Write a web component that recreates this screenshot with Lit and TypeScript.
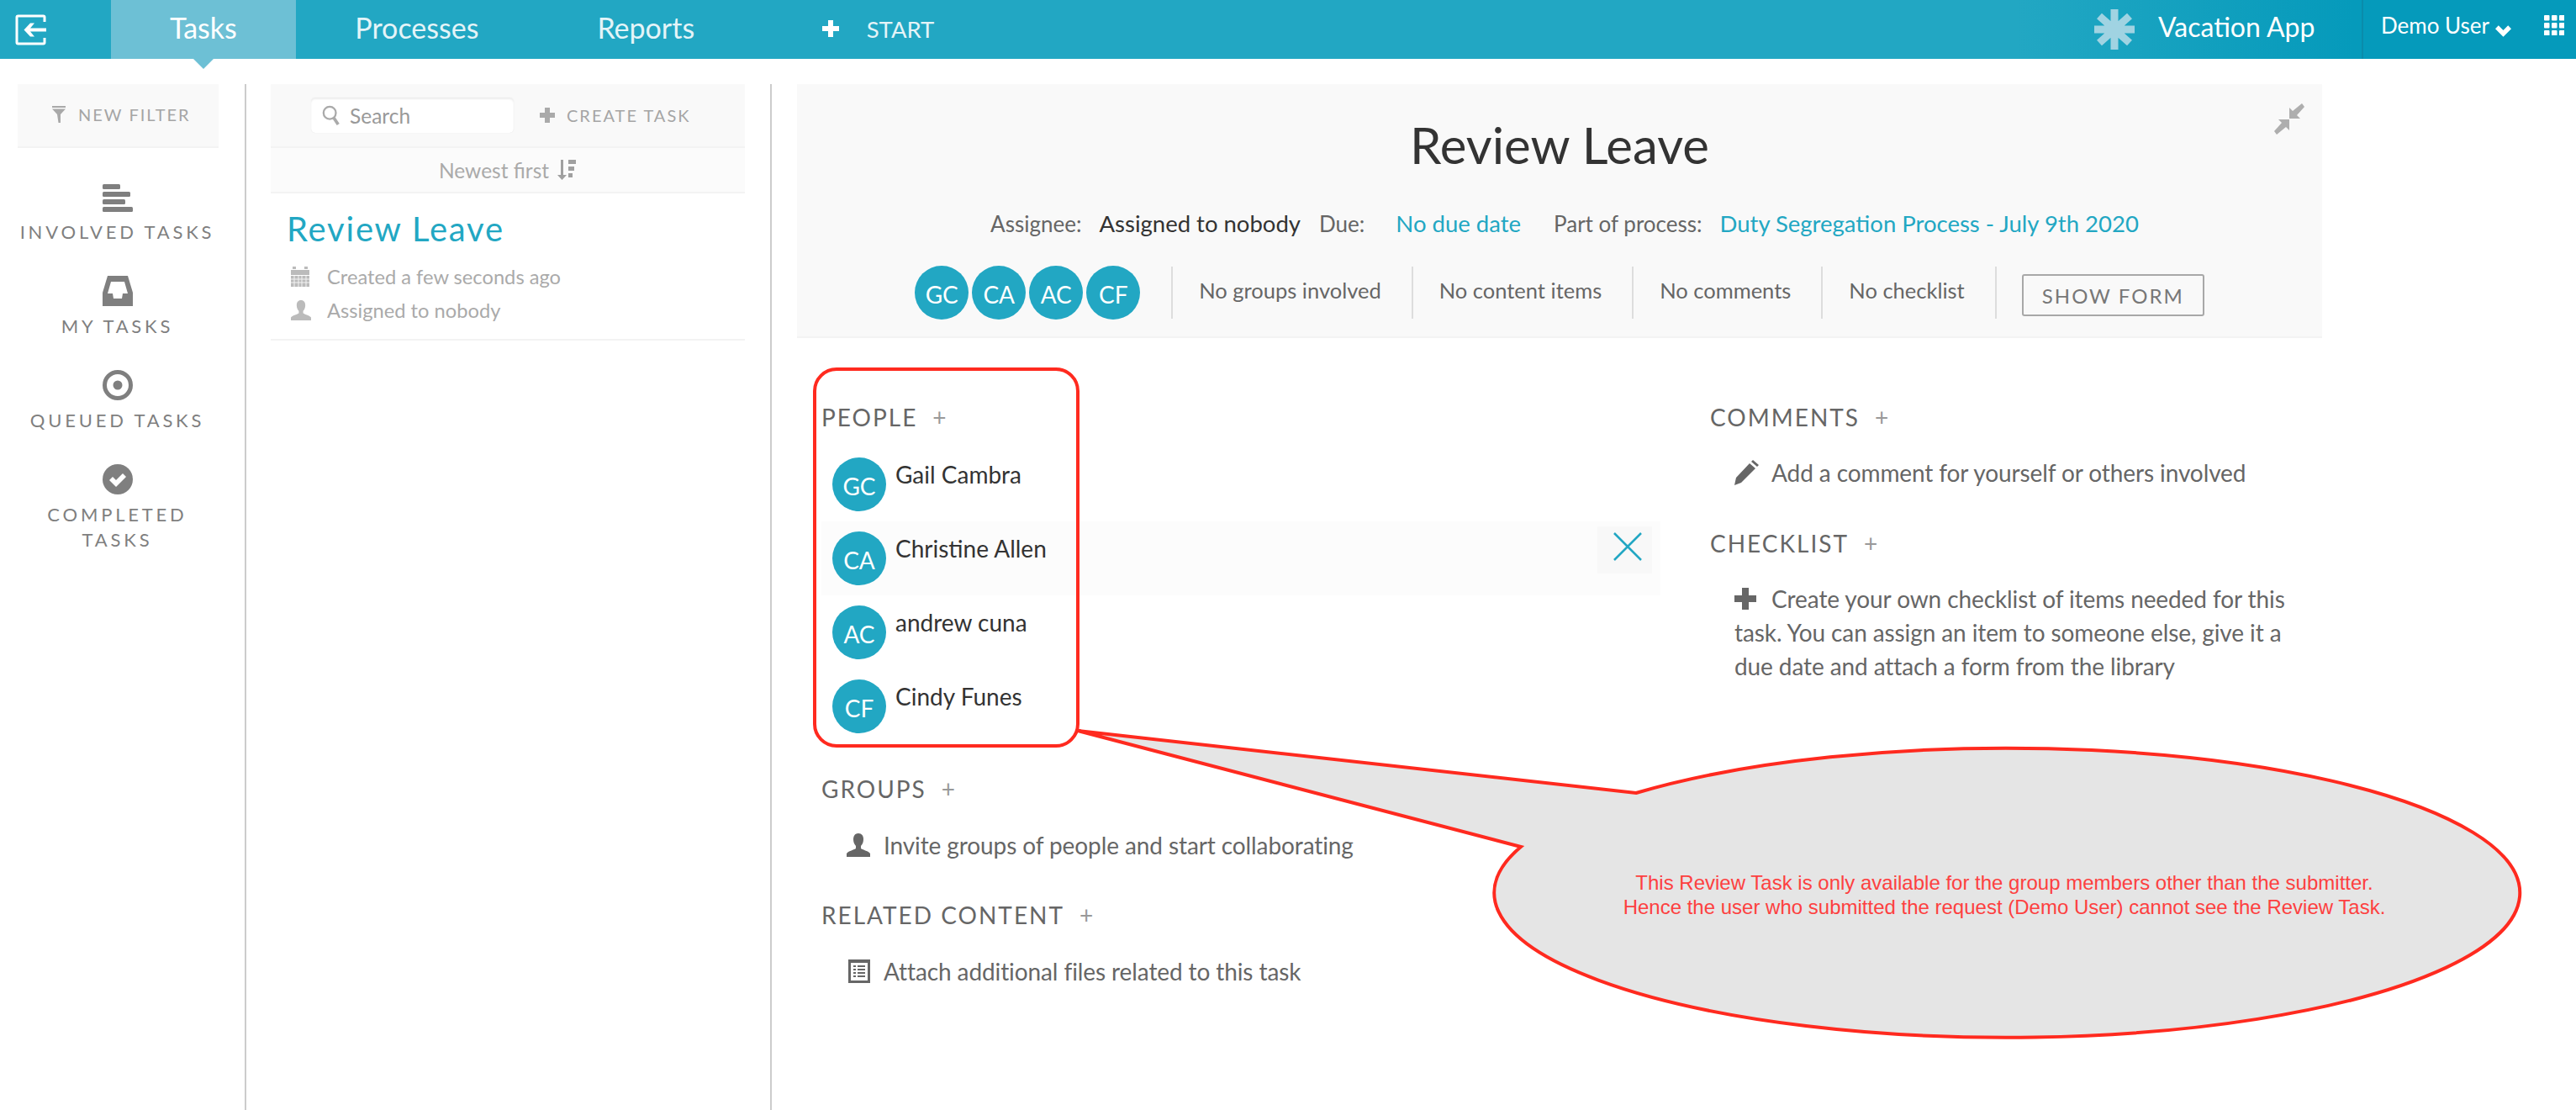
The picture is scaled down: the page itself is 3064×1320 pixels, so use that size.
import { css, html, LitElement, svg } from "lit";
import { customElement } from "lit/decorators.js";

const PEOPLE = [
  { initials: "GC", name: "Gail Cambra" },
  { initials: "CA", name: "Christine Allen" },
  { initials: "AC", name: "andrew cuna" },
  { initials: "CF", name: "Cindy Funes" },
];

const personIcon = html`<svg viewBox="0 0 28 28" class="fill-icon">
  <path d="M14 0c-4 0-6 3-6 7 0 3 1 6 3 8v3c-3 2-9 3-11 6v4h28v-4c-2-3-8-4-11-6v-3c2-2 3-5 3-8 0-4-2-7-6-7z" />
</svg>`;

const plusIcon = html`<svg viewBox="0 0 26 26" class="fill-icon">
  <path d="M9 0h8v9h9v8h-9v9H9v-9H0V9h9z" />
</svg>`;

@customElement("app-root")
export class AppRoot extends LitElement {
  private sectionHead(title: string) {
    return html`<div class="section-head">${title}<span class="add">+</span></div>`;
  }

  private renderNav() {
    return html`
      <header class="nav">
        <svg class="logo" viewBox="0 0 37 37">
          <path d="M35 9V3.500Q35 2 33.500 2H3.500Q2 2 2 3.500v30Q2 35 3.500 35h30q1.500 0 1.500-1.500V28" fill="none" stroke="#fff" stroke-width="3" />
          <path d="M37 16.500H18l5-6h-5l-7.500 8 7.500 8h5l-5-6h19z" fill="#fff" />
        </svg>
        <a class="tab active">Tasks</a>
        <a class="tab">Processes</a>
        <a class="tab">Reports</a>
        <span class="start">
          <svg viewBox="0 0 20 20" class="start-plus"><path d="M7 0h6v7h7v6h-7v7H7v-7H0V7h7z" fill="#fff" /></svg>
          START
        </span>
        <svg class="asterisk" viewBox="0 0 48 48">
          <g stroke="#a0d3e2" stroke-width="9">
            <path d="M24 0v48M0 24h48M6 8l36 32M42 8L6 40" />
          </g>
        </svg>
        <span class="app-name">Vacation App</span>
        <span class="user">
          Demo User
          <svg viewBox="0 0 20 14" class="chevron"><path d="M0 4l4-4 6 6 6-6 4 4-10 10z" fill="#fff" /></svg>
        </span>
        <svg class="grid-icon" viewBox="0 0 24 24">
          <g fill="#fff">
            ${[0, 9, 18].flatMap((y) =>
              [0, 9, 18].map(
                (x) => svg`<rect x=${x} y=${y} width="6.500" height="6.500" rx="1" />`
              )
            )}
          </g>
        </svg>
      </header>
    `;
  }

  private renderSidebar() {
    return html`
      <aside class="sidebar">
        <div class="filter-bar">
          <svg viewBox="0 0 16 20" class="funnel">
            <path d="M0 0h16v2H0zM0 3.500h16L10 10v10H7.500L6 10z" fill="#a9a9a9" />
          </svg>
          NEW FILTER
        </div>
        <div class="side-item first">
          <svg viewBox="0 0 36 33" class="side-icon">
            <g fill="#7f7f7f">
              <rect width="21" height="6" rx="1.500" />
              <rect y="9" width="33" height="6" rx="1.500" />
              <rect y="18" width="27" height="6" rx="1.500" />
              <rect y="27" width="36" height="6" rx="1.500" />
            </g>
          </svg>
          <span>INVOLVED TASKS</span>
        </div>
        <div class="side-item">
          <svg viewBox="0 0 36 36" class="side-icon inbox">
            <path fill-rule="evenodd" fill="#7f7f7f" d="M6 0h24l6 20v16H0V20zM10 7L6 21h6l1 6h10l1-6h6L26 7z" />
          </svg>
          <span>MY TASKS</span>
        </div>
        <div class="side-item">
          <svg viewBox="0 0 36 36" class="side-icon inbox">
            <circle cx="18" cy="18" r="15.500" fill="none" stroke="#7f7f7f" stroke-width="5" />
            <circle cx="18" cy="18" r="5.500" fill="#7f7f7f" />
          </svg>
          <span>QUEUED TASKS</span>
        </div>
        <div class="side-item">
          <svg viewBox="0 0 36 36" class="side-icon inbox">
            <circle cx="18" cy="18" r="18" fill="#7f7f7f" />
            <path d="M8 19l4-4 4 4 8-8 4 4-12 12z" fill="#fff" />
          </svg>
          <span>COMPLETED<br />TASKS</span>
        </div>
      </aside>
    `;
  }

  private renderList() {
    return html`
      <section class="list">
        <div class="list-tools">
          <div class="search">
            <svg viewBox="0 0 24 26" class="search-icon">
              <circle cx="10" cy="10" r="8" fill="none" stroke="#aaa" stroke-width="2.500" />
              <path d="M15 16l6 9" stroke="#aaa" stroke-width="4" />
            </svg>
            Search
          </div>
          <span class="create">
            <svg viewBox="0 0 18 18" class="create-plus"><path d="M6 0h6v6h6v6h-6v6H6v-6H0V6h6z" fill="#aaa" /></svg>
            CREATE TASK
          </span>
        </div>
        <div class="sort-row">
          Newest first
          <svg viewBox="0 0 24 24" class="sort-icon">
            <path d="M5 0h3v18h4l-5.500 6L1 18h4z" fill="#a0a0a0" />
            <path d="M14 0h9v5h-9zM14 8h7v5h-7zM14 16h5v5h-5z" fill="#a0a0a0" />
          </svg>
        </div>
        <div class="task-card">
          <div class="task-title">Review Leave</div>
          <div class="task-meta">
            <svg viewBox="0 0 22 24" class="meta-icon">
              <path fill="#bbb" d="M2 0h4v3H2zM16 0h4v3h-4zM0 4h22v6H0zM0 11h22v13H0z" />
              <path stroke="#f3f3f3" stroke-width="1" d="M4 11v13M9 11v13M13 11v13M18 11v13M0 15h22M0 19h22" />
            </svg>
            Created a few seconds ago
          </div>
          <div class="task-meta">
            <span class="meta-person">${personIcon}</span>
            Assigned to nobody
          </div>
        </div>
      </section>
    `;
  }

  private renderHeaderPanel() {
    const chips = ["No groups involved", "No content items", "No comments", "No checklist"];
    return html`
      <div class="panel">
        <svg class="collapse" viewBox="0 0 36 37">
          <path fill="#aeaeae" d="M18 18V5l4 4L33 0l3 4-9 10 4 4zM18 19v13l-4-4L3 37l-3-4 9-10-4-4z" />
        </svg>
        <h1 class="title">Review Leave</h1>
        <div class="info">
          <span class="lbl">Assignee:</span>
          <span class="val-dark">Assigned to nobody</span>
          <span class="lbl due">Due:</span>
          <span class="val-link gap">No due date</span>
          <span class="lbl">Part of process:</span>
          <span class="val-link">Duty Segregation Process - July 9th 2020</span>
        </div>
        <div class="chips">
          <div class="avatars">
            ${PEOPLE.map((p) => html`<span class="avatar">${p.initials}</span>`)}
          </div>
          ${chips.map((c) => html`<div class="chip">${c}</div>`)}
          <div class="chip-btn"><button class="show-form">SHOW FORM</button></div>
        </div>
      </div>
    `;
  }

  private renderDetails() {
    return html`
      <div class="details">
        <div class="col-left">
          ${this.sectionHead("PEOPLE")}
          <div class="people">
            ${PEOPLE.map(
              (p, i) => html`
                <div class="person ${i === 1 ? "hover" : ""}">
                  <span class="avatar">${p.initials}</span>
                  <span class="person-name">${p.name}</span>
                  ${i === 1
                    ? html`<span class="remove">
                        <svg viewBox="0 0 34 34"><path d="M1 1l32 32M33 1L1 33" stroke="#22a7c3" stroke-width="2.500" fill="none" /></svg>
                      </span>`
                    : ""}
                </div>
              `
            )}
          </div>
          <div class="spaced-a">${this.sectionHead("GROUPS")}</div>
          <div class="hint first-hint">
            <span class="hint-icon person-hint">${personIcon}</span>
            Invite groups of people and start collaborating
          </div>
          <div class="spaced-b">${this.sectionHead("RELATED CONTENT")}</div>
          <div class="hint first-hint">
            <svg viewBox="0 0 26 28" class="hint-icon doc">
              <path fill-rule="evenodd" fill="#666" d="M0 0h26v28H0zM3 4v21h20V4z" />
              <path fill="#666" d="M6 7h3v2H6zM11 7h9v2h-9zM6 11h3v2H6zM11 11h9v2h-9zM6 15h3v2H6zM11 15h9v2h-9zM6 19h3v2H6zM11 19h9v2h-9z" />
            </svg>
            Attach additional files related to this task
          </div>
        </div>
        <div class="col-right">
          ${this.sectionHead("COMMENTS")}
          <div class="hint right-hint">
            <svg viewBox="0 0 30 30" class="hint-icon pencil">
              <path fill="#666" d="M0 30l2-9L18 4l7 6L8 27zM20 2l2-2 7 6-2 2z" />
            </svg>
            Add a comment for yourself or others involved
          </div>
          <div class="spaced-c">${this.sectionHead("CHECKLIST")}</div>
          <div class="hint right-hint wrap">
            <span class="hint-icon check-plus">${plusIcon}</span>
            Create your own checklist of items needed for this task. You can assign an item to someone else, give it a due date and attach a form from the library
          </div>
        </div>
      </div>
    `;
  }

  private renderOverlay() {
    return html`
      <svg class="overlay" viewBox="0 0 3064 1320">
        <rect x="969" y="439" width="313" height="448" rx="26" fill="none" stroke="#ff2a1f" stroke-width="4" />
        <path
          d="M1282 869L1946 943A610 172 0 1 1 1809 1007Z"
          fill="#e5e5e5"
          stroke="#ff2a1f"
          stroke-width="4"
        />
        <text class="note" x="2384" y="1058">This Review Task is only available for the group members other than the submitter.</text>
        <text class="note" x="2384" y="1087">Hence the user who submitted the request (Demo User) cannot see the Review Task.</text>
      </svg>
    `;
  }

  render() {
    return html`
      ${this.renderNav()}
      <div class="body">
        ${this.renderSidebar()} ${this.renderList()}
        <main class="main">${this.renderHeaderPanel()} ${this.renderDetails()}</main>
      </div>
      ${this.renderOverlay()}
    `;
  }

  static styles = css`
    :host {
      display: block;
      position: relative;
      width: 3064px;
      height: 1320px;
      overflow: hidden;
      background: #fff;
      font-family: Lato, "Open Sans", sans-serif;
      color: #666;
    }

    svg {
      display: block;
      flex: none;
    }

    .fill-icon {
      width: 100%;
      height: 100%;
      fill: currentColor;
    }

    /* top bar */
    .nav {
      display: flex;
      align-items: center;
      height: 70px;
      background: linear-gradient(90deg, #22a7c3 0, #22a7c3 2400px, #059abb 2800px);
      color: #fff;
    }

    .logo {
      width: 37px;
      height: 37px;
      margin: 0 77px 0 18px;
    }

    .tab {
      position: relative;
      display: flex;
      align-items: center;
      box-sizing: border-box;
      height: 70px;
      padding: 0 70.500px 5px;
      font-size: 34px;
      color: #e4f4f8;
    }

    .tab.active {
      padding: 0 70px 5px;
      background: #6dc0d5;
      color: #fff;
    }

    .tab.active::after {
      content: "";
      position: absolute;
      left: 98px;
      top: 70px;
      border: 12px solid transparent;
      border-top-color: #6dc0d5;
      border-bottom-width: 0;
    }

    .start {
      display: flex;
      align-items: center;
      margin-left: 81px;
      padding-bottom: 2px;
      font-size: 27.500px;
      color: #e4f4f8;
    }

    .start-plus {
      width: 20px;
      height: 20px;
      margin-right: 33px;
    }

    .asterisk {
      width: 48px;
      height: 48px;
      margin-left: auto;
    }

    .app-name {
      box-sizing: border-box;
      width: 242px;
      margin-left: 28px;
      padding-bottom: 8px;
      font-size: 32px;
    }

    .user {
      display: flex;
      align-items: center;
      box-sizing: border-box;
      height: 70px;
      padding: 0 0 10px 21px;
      border-left: 2px solid #0a8cab;
      font-size: 26px;
    }

    .chevron {
      width: 19px;
      height: 14px;
      margin: 14px 0 0 7px;
    }

    .grid-icon {
      width: 24px;
      height: 24px;
      margin: -10px 14px 0 39px;
    }

    /* page columns */
    .body {
      display: flex;
      padding-top: 30px;
      height: 1220px;
    }

    .sidebar {
      flex: none;
      box-sizing: border-box;
      width: 293px;
      padding-left: 21px;
      border-right: 2px solid #ccc;
    }

    .filter-bar {
      display: flex;
      align-items: center;
      box-sizing: border-box;
      width: 239px;
      height: 76px;
      padding: 0 0 2px 41px;
      background: #f9f9f9;
      border-bottom: 2px solid #f3f3f3;
      font-size: 20px;
      letter-spacing: 2px;
      color: #a5a5a5;
    }

    .funnel {
      width: 16px;
      height: 20px;
      margin-right: 15px;
    }

    .side-item {
      display: flex;
      flex-direction: column;
      align-items: center;
      width: 237px;
      margin-top: 37px;
      font-size: 22px;
      line-height: 30px;
      letter-spacing: 3.800px;
      text-align: center;
      color: #7f7f7f;
    }

    .side-item.first {
      margin-top: 43px;
    }

    .side-icon {
      width: 36px;
      height: 33px;
      margin-bottom: 9px;
    }

    .side-icon.inbox {
      height: 36px;
    }

    .list {
      flex: none;
      box-sizing: border-box;
      width: 625px;
      padding-left: 29px;
      padding-right: 30px;
      border-right: 2px solid #ccc;
    }

    .list-tools {
      display: flex;
      align-items: center;
      box-sizing: border-box;
      height: 76px;
      padding-left: 48px;
      background: #f9f9f9;
      border-bottom: 2px solid #f3f3f3;
    }

    .search {
      display: flex;
      align-items: center;
      box-sizing: border-box;
      width: 241px;
      height: 42px;
      padding-left: 13px;
      background: #fff;
      border-radius: 5px;
      box-shadow: inset 0 2px 2px #eee, 0 0 1px #ddd;
      font-size: 24.500px;
      color: #999;
    }

    .search-icon {
      width: 22px;
      height: 24px;
      margin-right: 11px;
    }

    .create {
      display: flex;
      align-items: center;
      margin-left: 31px;
      font-size: 20px;
      letter-spacing: 2px;
      color: #a5a5a5;
    }

    .create-plus {
      width: 18px;
      height: 18px;
      margin-right: 14px;
    }

    .sort-row {
      display: flex;
      align-items: center;
      justify-content: center;
      box-sizing: border-box;
      height: 54px;
      background: #fbfbfb;
      border-bottom: 2px solid #f3f3f3;
      font-size: 24.500px;
      color: #aaa;
    }

    .sort-icon {
      width: 24px;
      height: 24px;
      margin-left: 9px;
    }

    .task-card {
      box-sizing: border-box;
      height: 175px;
      padding: 0 0 0 19px;
      border-bottom: 2px solid #f3f3f3;
    }

    .task-title {
      margin-bottom: 13px;
      padding-top: 18px;
      font-size: 40px;
      line-height: 48px;
      letter-spacing: 1.800px;
      color: #22a7c3;
    }

    .task-meta {
      display: flex;
      align-items: center;
      height: 40px;
      font-size: 23.700px;
      color: #aaa;
    }

    .meta-icon {
      width: 22px;
      height: 24px;
      margin: 0 21px 0 5px;
    }

    .meta-person {
      flex: none;
      width: 24px;
      height: 24px;
      margin: 0 19px 0 5px;
      color: #bbb;
    }

    .main {
      flex: none;
      width: 1814px;
      margin-left: 30px;
    }

    /* task header panel */
    .panel {
      position: relative;
      display: flex;
      flex-direction: column;
      align-items: center;
      box-sizing: border-box;
      height: 302px;
      padding-top: 32px;
      background: #f9f9f9;
      border-bottom: 2px solid #f3f3f3;
    }

    .collapse {
      position: absolute;
      right: 21px;
      top: 23px;
      width: 36px;
      height: 37px;
    }

    .title {
      margin: 0;
      font-size: 60px;
      line-height: 80px;
      font-weight: 400;
      color: #333;
    }

    .info {
      display: flex;
      align-items: baseline;
      margin-top: 34px;
      padding-left: 12px;
      font-size: 27.500px;
      line-height: 40px;
    }

    .lbl {
      margin-right: 21px;
      font-size: 26px;
      color: #666;
    }

    .lbl.due {
      margin-right: 37px;
    }

    .val-dark {
      margin-right: 22px;
      color: #333;
    }

    .val-link {
      color: #22a7c3;
    }

    .val-link.gap {
      margin-right: 39px;
    }

    .chips {
      display: flex;
      align-items: center;
      margin-top: 30px;
      height: 64px;
    }

    .avatars {
      display: flex;
      gap: 4px;
      margin-right: 37px;
    }

    .avatar {
      display: flex;
      flex: none;
      align-items: center;
      justify-content: center;
      width: 64px;
      height: 64px;
      padding-top: 3px;
      box-sizing: border-box;
      border-radius: 50%;
      background: #22a7c3;
      color: #fff;
      font-size: 28px;
    }

    .chip {
      box-sizing: border-box;
      height: 62px;
      padding: 8px 36px 0 31px;
      border-left: 2px solid #ddd;
      font-size: 25.500px;
      line-height: 40px;
      color: #666;
    }

    .chip-btn {
      display: flex;
      align-items: center;
      box-sizing: border-box;
      height: 62px;
      padding: 6px 0 0 30px;
      border-left: 2px solid #ddd;
    }

    .show-form {
      width: 217px;
      height: 50px;
      padding: 0;
      background: transparent;
      border: 2px solid #a8a8a8;
      border-radius: 3px;
      font-family: inherit;
      font-size: 24px;
      letter-spacing: 2px;
      color: #777;
    }

    /* details below the panel */
    .details {
      display: flex;
      padding: 74px 0 0 29px;
    }

    .col-left {
      flex: none;
      width: 1057px;
    }

    .col-right {
      flex: none;
      width: 690px;
    }

    .section-head {
      font-size: 28px;
      line-height: 40px;
      letter-spacing: 2px;
      color: #666;
    }

    .add {
      margin-left: 18px;
      color: #999;
    }

    .people {
      width: 998px;
      margin-top: 16px;
    }

    .person {
      position: relative;
      display: flex;
      box-sizing: border-box;
      height: 88px;
      padding: 12px 0 0 13px;
    }

    .person.hover {
      background: #fcfcfc;
    }

    .person-name {
      margin-left: 11px;
      font-size: 28px;
      line-height: 40px;
      color: #333;
    }

    .remove {
      position: absolute;
      right: 10px;
      top: 6px;
      box-sizing: border-box;
      width: 65px;
      height: 56px;
      padding: 7px 0 0 19px;
      background: #f8f8f8;
    }

    .remove svg {
      width: 34px;
      height: 34px;
    }

    .spaced-a {
      margin-top: 34px;
    }

    .spaced-b {
      margin-top: 43px;
    }

    .spaced-c {
      margin-top: 44px;
    }

    .hint {
      display: flex;
      align-items: center;
      padding-left: 30px;
      font-size: 28px;
      line-height: 40px;
      letter-spacing: -0.100px;
      color: #666;
    }

    .first-hint {
      margin-top: 27px;
    }

    .right-hint {
      margin-top: 26px;
      padding-left: 29px;
    }

    .hint-icon {
      flex: none;
      margin-right: 16px;
      color: #666;
    }

    .person-hint {
      width: 28px;
      height: 28px;
    }

    .doc {
      width: 26px;
      height: 28px;
      margin-left: 2px;
    }

    .pencil {
      width: 30px;
      height: 30px;
      margin-right: 14px;
    }

    .wrap {
      display: block;
      width: 670px;
    }

    .check-plus {
      display: inline-block;
      width: 26px;
      height: 26px;
      margin-right: 11px;
      vertical-align: -2px;
    }

    /* annotation drawn over the page */
    .overlay {
      position: absolute;
      left: 0;
      top: 0;
      width: 3064px;
      height: 1320px;
      pointer-events: none;
    }

    .note {
      font-family: "Liberation Sans", Arial, sans-serif;
      font-size: 24px;
      fill: #fd4040;
      text-anchor: middle;
    }
  `;
}

declare global {
  interface HTMLElementTagNameMap {
    "app-root": AppRoot;
  }
}
